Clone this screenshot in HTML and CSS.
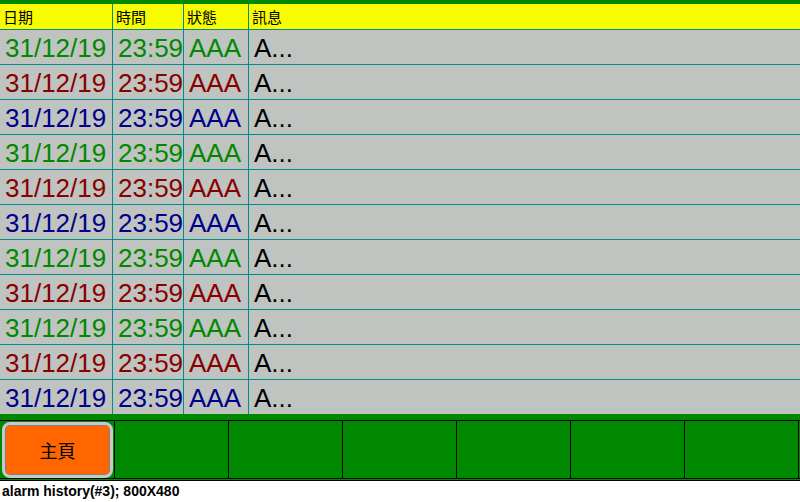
FILE: index.html
```html
<!DOCTYPE html>
<html lang="zh-Hant">
<head>
<meta charset="utf-8">
<title>alarm history</title>
<link rel="stylesheet" href="styles.css">
</head>
<body>
<div class="screen">
  <div class="grid">
    <div class="hd">日期</div><div class="hd">時間</div><div class="hd">狀態</div><div class="hd">訊息</div>

    <div class="c g">31/12/19</div><div class="c g">23:59</div><div class="c g">AAA</div><div class="c k">A...</div>
    <div class="c r">31/12/19</div><div class="c r">23:59</div><div class="c r">AAA</div><div class="c k">A...</div>
    <div class="c b">31/12/19</div><div class="c b">23:59</div><div class="c b">AAA</div><div class="c k">A...</div>
    <div class="c g">31/12/19</div><div class="c g">23:59</div><div class="c g">AAA</div><div class="c k">A...</div>
    <div class="c r">31/12/19</div><div class="c r">23:59</div><div class="c r">AAA</div><div class="c k">A...</div>
    <div class="c b">31/12/19</div><div class="c b">23:59</div><div class="c b">AAA</div><div class="c k">A...</div>
    <div class="c g">31/12/19</div><div class="c g">23:59</div><div class="c g">AAA</div><div class="c k">A...</div>
    <div class="c r">31/12/19</div><div class="c r">23:59</div><div class="c r">AAA</div><div class="c k">A...</div>
    <div class="c g">31/12/19</div><div class="c g">23:59</div><div class="c g">AAA</div><div class="c k">A...</div>
    <div class="c r">31/12/19</div><div class="c r">23:59</div><div class="c r">AAA</div><div class="c k">A...</div>
    <div class="c b">31/12/19</div><div class="c b">23:59</div><div class="c b">AAA</div><div class="c k">A...</div>
  </div>
  <div class="toolbar">
    <div class="buttons">
      <div class="slot first"><div class="btn">主頁</div></div>
      <div class="slot"></div>
      <div class="slot"></div>
      <div class="slot"></div>
      <div class="slot"></div>
      <div class="slot"></div>
      <div class="slot"></div>
    </div>
  </div>
</div>
<div class="caption">alarm history(#3); 800X480</div>
</body>
</html>
```

FILE: styles.css
```css
html, body {
  margin: 0;
  padding: 0;
  background: #ffffff;
}
.screen {
  width: 800px;
  border-top: 4px solid #008800;
}
.grid {
  display: grid;
  grid-template-columns: 112px 70px 64px 1fr;
  grid-template-rows: 25px repeat(11, 34px);
  gap: 1px;
  background: #008c8c;
}
.hd {
  background: #f8fc00;
  font-family: "Noto Sans CJK TC", "Noto Sans CJK SC", sans-serif;
  font-size: 15px;
  line-height: 25px;
  padding-left: 3px;
  color: #000;
}
.c {
  background: #c0c4c0;
  font-family: "Liberation Sans", sans-serif;
  font-size: 26px;
  line-height: 34px;
  padding-left: 5px;
  padding-top: 1px;
  box-sizing: border-box;
  white-space: nowrap;
  overflow: hidden;
}
.g { color: #008800; }
.r { color: #880000; }
.b { color: #000088; }
.k { color: #000000; }
.toolbar {
  background: #008800;
  padding-top: 6px;
  padding-bottom: 1px;
  border-bottom: 1px solid #000;
}
.buttons {
  display: flex;
  height: 57px;
  border-top: 1px solid #000;
  border-bottom: 1px solid #000;
}
.slot {
  width: 113px;
  border-right: 1px solid #000;
  background: #008800;
}
.slot.first {
  display: flex;
  padding: 1px 1px 0 2px;
  box-sizing: border-box;
  width: 115px;
}
.btn {
  flex: 1;
  background: #ff6600;
  border: 3px solid #c8c8c8;
  border-radius: 8px;
  box-shadow: inset 0 0 0 1px #808080;
  display: flex;
  align-items: center;
  justify-content: center;
  font-family: "Noto Sans CJK TC", "Noto Sans CJK SC", sans-serif;
  font-size: 18px;
  color: #000;
}
.caption {
  font-family: "Liberation Sans", sans-serif;
  font-size: 14px;
  font-weight: bold;
  padding: 2px 0 0 2px;
  color: #000;
}
```
